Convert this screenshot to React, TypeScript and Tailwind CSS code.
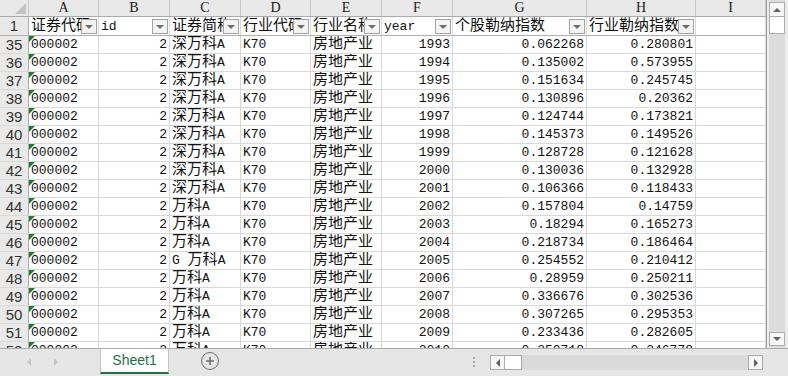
import React from 'react';

const cols = [
  { key: 'A', w: 'w-[70px]' },
  { key: 'B', w: 'w-[71px]' },
  { key: 'C', w: 'w-[71px]' },
  { key: 'D', w: 'w-[70px]' },
  { key: 'E', w: 'w-[71px]' },
  { key: 'F', w: 'w-[71px]' },
  { key: 'G', w: 'w-[134px]' },
  { key: 'H', w: 'w-[109px]' },
  { key: 'I', w: 'w-[70px]' },
];

const headers = ['证券代码', 'id', '证券简称', '行业代码', '行业名称', 'year', '个股勒纳指数', '行业勒纳指数'];

// [row, name, year, 个股, 行业]
const rows: [number, string, string, string, string][] = [
  [35, '深万科A', '1993', '0.062268', '0.280801'],
  [36, '深万科A', '1994', '0.135002', '0.573955'],
  [37, '深万科A', '1995', '0.151634', '0.245745'],
  [38, '深万科A', '1996', '0.130896', '0.20362'],
  [39, '深万科A', '1997', '0.124744', '0.173821'],
  [40, '深万科A', '1998', '0.145373', '0.149526'],
  [41, '深万科A', '1999', '0.128728', '0.121628'],
  [42, '深万科A', '2000', '0.130036', '0.132928'],
  [43, '深万科A', '2001', '0.106366', '0.118433'],
  [44, '万科A', '2002', '0.157804', '0.14759'],
  [45, '万科A', '2003', '0.18294', '0.165273'],
  [46, '万科A', '2004', '0.218734', '0.186464'],
  [47, 'G\u00a0万科A', '2005', '0.254552', '0.210412'],
  [48, '万科A', '2006', '0.28959', '0.250211'],
  [49, '万科A', '2007', '0.336676', '0.302536'],
  [50, '万科A', '2008', '0.307265', '0.295353'],
  [51, '万科A', '2009', '0.233436', '0.282605'],
  [52, '万科A', '2010', '0.350718', '0.346778'],
];

// bigger size for CJK runs, mono for latin
const Txt = ({ s }: { s: string }) => (
  <>
    {s.split(/([\u4e00-\u9fff]+)/).map((part, i) =>
      /[\u4e00-\u9fff]/.test(part) ? (
        <span key={i} className="text-[15px]">{part}</span>
      ) : (
        <span key={i}>{part}</span>
      )
    )}
  </>
);

const FilterBtn = () => (
  <div className="absolute right-[1px] bottom-[1px] w-[16px] h-[15px] border border-[#a3a3a3] bg-[#f4f4f4] flex items-center justify-center">
    <div className="w-0 h-0 border-l-[4px] border-r-[4px] border-t-[4px] border-l-transparent border-r-transparent border-t-[#6d6d6d]" />
  </div>
);

const GreenMark = () => (
  <div className="absolute top-0 left-0 w-0 h-0 border-t-[6px] border-r-[6px] border-t-[#1e7b30] border-r-transparent" />
);

const cell = 'relative h-full shrink-0 border-r border-[#d9d9d9] overflow-hidden whitespace-nowrap flex items-end px-[2px]';

export default function App() {
  return (
    <div className="w-[788px] h-[376px] bg-white flex flex-col overflow-hidden text-[#111] font-['Liberation_Mono','Noto_Sans_CJK_SC',monospace] text-[13px]">
      <div className="flex h-[348px]">
        {/* Sheet grid */}
        <div className="w-[767px] h-full overflow-hidden border-r border-[#9e9e9e] flex flex-col">
          {/* Column letters */}
          <div className="flex h-[17px] shrink-0 bg-[#e9e9e9] border-b border-[#ababab]">
            <div className="relative w-[29px] shrink-0 border-r border-[#c8c8c8]">
              <div className="absolute right-[2px] bottom-[2px] w-0 h-0 border-b-[11px] border-l-[11px] border-b-[#c3c3c3] border-l-transparent" />
            </div>
            {cols.map((c) => (
              <div key={c.key} className={`${c.w} shrink-0 border-r border-[#c8c8c8] flex items-center justify-center text-[14px] leading-none text-[#1a1a1a] font-['Liberation_Serif',serif]`}>
                {c.key}
              </div>
            ))}
          </div>
          {/* Row 1 : filter headers */}
          <div className="flex h-[19px] shrink-0 border-b border-[#b0b0b0]">
            <div className="w-[29px] shrink-0 bg-[#e9e9e9] border-r border-[#ababab] flex items-end justify-center pb-[1px] font-['Liberation_Sans',sans-serif] text-[15px] leading-[16px] text-[#333]">
              1
            </div>
            {cols.map((c, i) => (
              <div key={c.key} className={`${cell} ${c.w} leading-[17px]`}>
                {headers[i] !== undefined && <Txt s={headers[i]} />}
                {headers[i] !== undefined && <FilterBtn />}
              </div>
            ))}
          </div>
          {/* Data rows */}
          {rows.map(([n, name, year, g, h]) => (
            <div key={n} className="flex h-[18px] shrink-0 border-b border-[#d9d9d9]">
              <div className="w-[29px] shrink-0 bg-[#e9e9e9] border-r border-[#ababab] flex items-end justify-center font-['Liberation_Sans',sans-serif] text-[15px] leading-[16px] text-[#333]">
                {n}
              </div>
              <div className={`${cell} w-[70px] leading-[16px]`}>
                <GreenMark />
                000002
              </div>
              <div className={`${cell} w-[71px] justify-end leading-[16px]`}>2</div>
              <div className={`${cell} w-[71px] leading-[16px]`}>
                <Txt s={name} />
              </div>
              <div className={`${cell} w-[70px] leading-[16px]`}>K70</div>
              <div className={`${cell} w-[71px] leading-[16px]`}>
                <Txt s="房地产业" />
              </div>
              <div className={`${cell} w-[71px] justify-end leading-[16px]`}>{year}</div>
              <div className={`${cell} w-[134px] justify-end leading-[16px]`}>{g}</div>
              <div className={`${cell} w-[109px] justify-end leading-[16px]`}>{h}</div>
              <div className={`${cell} w-[70px]`} />
            </div>
          ))}
        </div>
        {/* Vertical scrollbar */}
        <div className="w-[21px] h-full bg-[#ececec] flex pl-[2px] pr-[3px]">
          <div className="w-[16px] h-full bg-[#dcdcdc] flex flex-col justify-between pt-[2px] pb-[2px]">
            <div className="flex flex-col">
              <div className="h-[15px] border border-[#ababab] bg-[#f7f7f7] flex items-center justify-center">
                <div className="w-0 h-0 border-l-[4px] border-r-[4px] border-b-[4px] border-l-transparent border-r-transparent border-b-[#606060]" />
              </div>
              <div className="h-[17px] border border-t-0 border-[#ababab] bg-white" />
            </div>
            <div className="h-[14px] border border-[#ababab] bg-[#f7f7f7] flex items-center justify-center">
              <div className="w-0 h-0 border-l-[4px] border-r-[4px] border-t-[4px] border-l-transparent border-r-transparent border-t-[#606060]" />
            </div>
          </div>
        </div>
      </div>

      {/* Sheet tabs bar */}
      <div className="h-[28px] bg-[#e6e6e6] border-t border-[#ababab] flex items-start">
        <div className="w-[100px] h-[26px] flex items-center pl-[27px] gap-[23px]">
          <div className="w-0 h-0 border-t-[4px] border-b-[4px] border-r-[4px] border-t-transparent border-b-transparent border-r-[#c4c4c4]" />
          <div className="w-0 h-0 border-t-[4px] border-b-[4px] border-l-[4px] border-t-transparent border-b-transparent border-l-[#c4c4c4]" />
        </div>
        <div className="w-[69px] h-[25px] bg-white border-x border-[#c4c4c4] border-b-2 border-b-[#217346] flex items-center justify-center font-['Liberation_Sans',sans-serif] text-[14px] text-[#217346]">
          Sheet1
        </div>
        <div className="ml-[32px] mt-[3px] w-[18px] h-[18px] rounded-full border-[1.5px] border-[#707070] flex items-center justify-center">
          <svg width="10" height="10" viewBox="0 0 10 10">
            <path d="M5 1v8M1 5h8" stroke="#707070" strokeWidth="1.6" />
          </svg>
        </div>
        <div className="ml-[254px] mt-[8px] flex flex-col gap-[2px]">
          <div className="w-[2px] h-[2px] bg-[#ababab]" />
          <div className="w-[2px] h-[2px] bg-[#ababab]" />
          <div className="w-[2px] h-[2px] bg-[#ababab]" />
        </div>
        <div className="ml-[15px] mt-[6px] w-[273px] h-[15px] bg-[#dadada] flex">
          <div className="w-[15px] h-full border border-[#ababab] bg-[#f7f7f7] flex items-center justify-center">
            <div className="w-0 h-0 border-t-[4px] border-b-[4px] border-r-[4px] border-t-transparent border-b-transparent border-r-[#606060]" />
          </div>
          <div className="w-[17px] h-full border border-l-0 border-[#ababab] bg-white" />
          <div className="flex-1" />
          <div className="w-[15px] h-full border border-[#ababab] bg-[#f7f7f7] flex items-center justify-center">
            <div className="w-0 h-0 border-t-[4px] border-b-[4px] border-l-[4px] border-t-transparent border-b-transparent border-l-[#606060]" />
          </div>
        </div>
      </div>
    </div>
  );
}
